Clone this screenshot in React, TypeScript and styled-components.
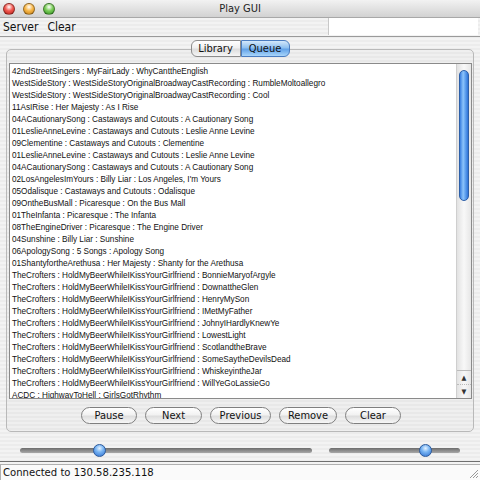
import React from "react";
import styled, { createGlobalStyle } from "styled-components";

const songs = [
  "42ndStreetSingers : MyFairLady : WhyCanttheEnglish",
  "WestSideStory : WestSideStoryOriginalBroadwayCastRecording : RumbleMoltoallegro",
  "WestSideStory : WestSideStoryOriginalBroadwayCastRecording : Cool",
  "11AsIRise : Her Majesty : As I Rise",
  "04ACautionarySong : Castaways and Cutouts : A Cautionary Song",
  "01LeslieAnneLevine : Castaways and Cutouts : Leslie Anne Levine",
  "09Clementine : Castaways and Cutouts : Clementine",
  "01LeslieAnneLevine : Castaways and Cutouts : Leslie Anne Levine",
  "04ACautionarySong : Castaways and Cutouts : A Cautionary Song",
  "02LosAngelesImYours : Billy Liar : Los Angeles, I'm Yours",
  "05Odalisque : Castaways and Cutouts : Odalisque",
  "09OntheBusMall : Picaresque : On the Bus Mall",
  "01TheInfanta : Picaresque : The Infanta",
  "08TheEngineDriver : Picaresque : The Engine Driver",
  "04Sunshine : Billy Liar : Sunshine",
  "06ApologySong : 5 Songs : Apology Song",
  "01ShantyfortheArethusa : Her Majesty : Shanty for the Arethusa",
  "TheCrofters : HoldMyBeerWhileIKissYourGirlfriend : BonnieMaryofArgyle",
  "TheCrofters : HoldMyBeerWhileIKissYourGirlfriend : DownattheGlen",
  "TheCrofters : HoldMyBeerWhileIKissYourGirlfriend : HenryMySon",
  "TheCrofters : HoldMyBeerWhileIKissYourGirlfriend : IMetMyFather",
  "TheCrofters : HoldMyBeerWhileIKissYourGirlfriend : JohnyIHardlyKnewYe",
  "TheCrofters : HoldMyBeerWhileIKissYourGirlfriend : LowestLight",
  "TheCrofters : HoldMyBeerWhileIKissYourGirlfriend : ScotlandtheBrave",
  "TheCrofters : HoldMyBeerWhileIKissYourGirlfriend : SomeSaytheDevilsDead",
  "TheCrofters : HoldMyBeerWhileIKissYourGirlfriend : WhiskeyintheJar",
  "TheCrofters : HoldMyBeerWhileIKissYourGirlfriend : WillYeGoLassieGo",
  "ACDC : HighwayToHell : GirlsGotRhythm",
];

const buttons = ["Pause", "Next", "Previous", "Remove", "Clear"];
const widths = [56, 57, 61, 58, 56];

const GlobalStyle = createGlobalStyle`
  html, body {
    margin: 0;
    padding: 0;
    font-family: "DejaVu Sans Condensed", "DejaVu Sans", sans-serif;
  }
`;

const pinstripe = `repeating-linear-gradient(
  to bottom,
  #ececec 0px,
  #ececec 2px,
  #f3f3f3 2px,
  #f3f3f3 4px
)`;

const Window = styled.div`
  width: 480px;
  height: 480px;
  display: flex;
  flex-direction: column;
  background: ${pinstripe};
  overflow: hidden;
`;

const TitleBar = styled.div`
  flex-shrink: 0;
  height: 18px;
  display: flex;
  align-items: center;
  position: relative;
  background: linear-gradient(to bottom, #f2f2f2, #d2d2d2);
  border-bottom: 1px solid #a8a8a8;
  box-sizing: border-box;
`;

const Lights = styled.div`
  display: flex;
  gap: 8px;
  padding-left: 3px;
`;

const Light = styled.span<{ $c1: string; $c2: string }>`
  width: 12px;
  height: 12px;
  border-radius: 50%;
  box-sizing: border-box;
  border: 1px solid rgba(0, 0, 0, 0.35);
  background: radial-gradient(circle at 50% 30%, #fff 0, ${(p) => p.$c1} 45%, ${(p) => p.$c2} 100%);
`;

const Title = styled.div`
  position: absolute;
  left: 0;
  right: 0;
  text-align: center;
  font-size: 11px;
  color: #222;
`;

const MenuBar = styled.div`
  flex-shrink: 0;
  height: 19px;
  box-sizing: border-box;
  display: flex;
  align-items: center;
  border-bottom: 1px solid #9a9a9a;
`;

const MenuItem = styled.span`
  font-size: 12px;
  color: #111;
  margin-left: 3px;
  margin-right: 6px;
`;

const SearchField = styled.div`
  margin-left: auto;
  align-self: flex-start;
  width: 149px;
  height: 17px;
  margin-right: 2px;
  background: #fff;
  border-left: 1px solid #c8c8c8;
`;

const Content = styled.div`
  flex: 1;
  display: flex;
  flex-direction: column;
  padding: 3px 6px 0 6px;
`;

const Tabs = styled.div`
  display: flex;
  justify-content: center;
  position: relative;
  z-index: 1;
`;

const Segment = styled.div<{ $active?: boolean; $first?: boolean }>`
  height: 17px;
  box-sizing: border-box;
  width: ${(p) => (p.$first ? 50 : 49)}px;
  display: flex;
  align-items: center;
  justify-content: center;
  font-size: 11px;
  color: #111;
  border: 1px solid ${(p) => (p.$active ? "#4a7cc0" : "#8c8c8c")};
  border-radius: ${(p) => (p.$first ? "6px 0 0 6px" : "0 6px 6px 0")};
  background: ${(p) =>
    p.$active
      ? "linear-gradient(to bottom, #d4e8fb 0%, #8fc0f0 45%, #62a2e8 55%, #a9d6fb 100%)"
      : "linear-gradient(to bottom, #ffffff 0%, #f0f0f0 45%, #dddddd 55%, #f6f6f6 100%)"};
`;

const GroupBox = styled.div`
  flex-shrink: 0;
  margin-top: -8px;
  height: 383px;
  box-sizing: border-box;
  border: 1px solid #b9b9b9;
  border-radius: 5px;
  padding: 13px 1px 0 2px;
  display: flex;
  flex-direction: column;
  background: rgba(0, 0, 0, 0.015);
`;

const ListFrame = styled.div`
  flex-shrink: 0;
  height: 336px;
  box-sizing: border-box;
  border: 1px solid #8a8a8a;
  background: #fff;
  display: flex;
  overflow: hidden;
`;

const Rows = styled.div`
  flex: 1;
  padding: 2px 0 0 2px;
  overflow: hidden;
`;

const Row = styled.div`
  height: 12px;
  line-height: 12px;
  font-family: "Liberation Sans", Arial, sans-serif;
  font-size: 8.2px;
  color: #111;
  white-space: nowrap;
`;

const ScrollTrack = styled.div`
  width: 14px;
  display: flex;
  flex-direction: column;
  border-left: 1px solid #cfcfcf;
  background: linear-gradient(to right, #e2e2e2, #f8f8f8 50%, #e6e6e6);
`;

const Thumb = styled.div`
  margin: 6px auto 0 auto;
  width: 10px;
  height: 131px;
  border-radius: 5px;
  box-sizing: border-box;
  border: 1px solid #2d5fa8;
  background: linear-gradient(to right, #3a7fe0 0%, #8cc4fb 40%, #6aaaf3 60%, #2f74d8 100%);
`;

const Arrows = styled.div`
  margin-top: auto;
  display: flex;
  flex-direction: column;
  border-top: 1px solid #bbb;
`;

const Arrow = styled.div`
  height: 13px;
  display: flex;
  align-items: center;
  justify-content: center;
  font-size: 7px;
  color: #333;
  & + & {
    border-top: 1px dotted #bbb;
  }
`;

const ButtonRow = styled.div`
  display: flex;
  justify-content: center;
  gap: 8px;
  padding: 8px 0 0 0;
  margin-left: 1px;
`;

const Button = styled.div<{ $w: number }>`
  width: ${(p) => p.$w}px;
  height: 17px;
  box-sizing: border-box;
  display: flex;
  align-items: center;
  justify-content: center;
  font-size: 11px;
  color: #111;
  border: 1px solid #7f7f7f;
  border-radius: 9px;
  background: linear-gradient(to bottom, #ffffff 0%, #f2f2f2 45%, #dedede 55%, #f7f7f7 100%);
`;

const SliderRow = styled.div`
  flex-shrink: 0;
  display: flex;
  align-items: center;
  height: 29px;
  box-sizing: border-box;
  padding: 7px 9px 0 14px;
  gap: 17px;
`;

const Slider = styled.div<{ $w: number }>`
  position: relative;
  width: ${(p) => p.$w}px;
  height: 5px;
  border-radius: 3px;
  background: linear-gradient(to bottom, #6d6d6d, #a8a8a8);
`;

const Knob = styled.span`
  position: absolute;
  top: -4px;
  width: 13px;
  height: 13px;
  margin-left: -6px;
  border-radius: 50%;
  box-sizing: border-box;
  border: 1px solid #2c5a9c;
  background: radial-gradient(circle at 50% 30%, #e6f3ff 0, #7ab6f4 40%, #2e6fcf 100%);
`;

const StatusBar = styled.div`
  flex-shrink: 0;
  height: 19px;
  box-sizing: border-box;
  border-top: 1px solid #6f6f6f;
  display: flex;
  align-items: flex-end;
  position: relative;
`;

const StatusField = styled.div`
  flex: 1;
  height: 16px;
  box-sizing: border-box;
  border-top: 1px solid #b0b0b0;
  border-left: 1px solid #b0b0b0;
  background: #fafafa;
  font-size: 11.2px;
  line-height: 15px;
  padding-left: 2px;
  color: #111;
`;

const Grip = styled.svg`
  position: absolute;
  right: 1px;
  bottom: 1px;
`;

export default function App() {
  return (
    <Window>
      <GlobalStyle />
      <TitleBar>
        <Lights>
          <Light $c1="#f25a52" $c2="#b51d16" />
          <Light $c1="#f8b84a" $c2="#c07a10" />
          <Light $c1="#7ccd5a" $c2="#2d8d1d" />
        </Lights>
        <Title>Play GUI</Title>
      </TitleBar>
      <MenuBar>
        <MenuItem>Server</MenuItem>
        <MenuItem>Clear</MenuItem>
        <SearchField />
      </MenuBar>
      <Content>
        <Tabs>
          <Segment $first>Library</Segment>
          <Segment $active>Queue</Segment>
        </Tabs>
        <GroupBox>
          <ListFrame>
            <Rows>
              {songs.map((s, i) => (
                <Row key={i}>{s}</Row>
              ))}
            </Rows>
            <ScrollTrack>
              <Thumb />
              <Arrows>
                <Arrow>▲</Arrow>
                <Arrow>▼</Arrow>
              </Arrows>
            </ScrollTrack>
          </ListFrame>
          <ButtonRow>
            {buttons.map((b, i) => (
              <Button key={b} $w={widths[i]}>
                {b}
              </Button>
            ))}
          </ButtonRow>
        </GroupBox>
        <SliderRow>
          <Slider $w={292}>
            <Knob style={{ left: "27%" }} />
          </Slider>
          <Slider $w={131}>
            <Knob style={{ left: "73%" }} />
          </Slider>
        </SliderRow>
      </Content>
      <StatusBar>
        <StatusField>Connected to 130.58.235.118</StatusField>
        <Grip width="10" height="10" viewBox="0 0 10 10">
          <path d="M9 1 L1 9 M9 4 L4 9 M9 7 L7 9" stroke="#999" strokeWidth="1" />
        </Grip>
      </StatusBar>
    </Window>
  );
}
